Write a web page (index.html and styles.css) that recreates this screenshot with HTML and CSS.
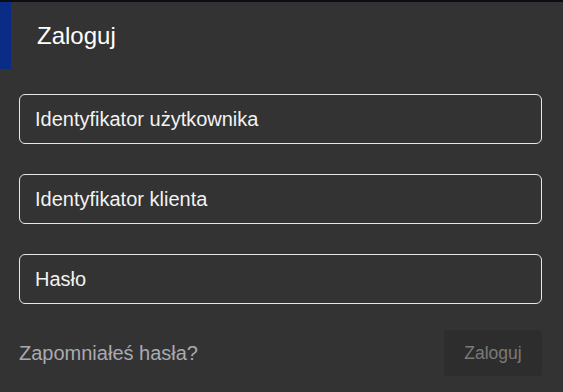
FILE: index.html
```html
<!DOCTYPE html>
<html lang="pl">
<head>
<meta charset="utf-8">
<title>Zaloguj</title>
<link rel="stylesheet" href="styles.css">
</head>
<body>
<div class="dialog">
  <header class="header">
    <div class="accent"></div>
    <h1 class="title">Zaloguj</h1>
  </header>
  <form class="form">
    <label class="field"><span class="field-label">Identyfikator użytkownika</span></label>
    <label class="field"><span class="field-label">Identyfikator klienta</span></label>
    <label class="field"><span class="field-label">Hasło</span></label>
    <div class="footer">
      <a class="forgot">Zapomniałeś hasła?</a>
      <button type="button" class="submit" disabled>Zaloguj</button>
    </div>
  </form>
</div>
</body>
</html>
```
FILE: styles.css
```css
html, body {
  margin: 0;
  padding: 0;
  background: #333333;
}
body {
  font-family: "Liberation Sans", Arial, sans-serif;
  width: 563px;
  height: 392px;
  overflow: hidden;
}
.dialog {
  border-top: 2px solid #0d0d15;
  height: 390px;
  box-sizing: border-box;
}
.header {
  display: flex;
  align-items: center;
  height: 67px;
}
.accent {
  width: 11px;
  align-self: stretch;
  background: #0a2c86;
}
.title {
  margin: 0 0 0 26px;
  font-size: 24px;
  font-weight: normal;
  color: #ffffff;
  line-height: 28px;
  padding-top: 1px;
}
.form {
  display: flex;
  flex-direction: column;
  gap: 30px;
  padding: 25px 21px 0 19px;
}
.field {
  display: flex;
  align-items: center;
  height: 50px;
  box-sizing: border-box;
  border: 1px solid #e8e8e8;
  border-radius: 6px;
  padding: 0 15px;
}
.field-label {
  font-size: 20px;
  color: #f2f2f2;
}
.footer {
  display: flex;
  justify-content: space-between;
  align-items: center;
  margin-top: -4px;
}
.forgot {
  font-size: 20px;
  color: #a9aab0;
  padding-top: 1px;
}
.submit {
  width: 98px;
  height: 46px;
  border: none;
  border-radius: 4px;
  background: #2d2d2d;
  color: #7a7a7a;
  font-family: "Liberation Sans", Arial, sans-serif;
  font-size: 17.5px;
  padding: 0;
}
```
